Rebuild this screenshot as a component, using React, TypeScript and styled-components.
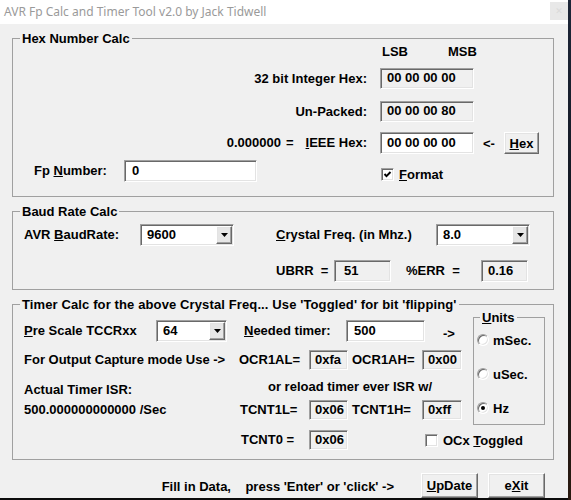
import React from "react";
import styled, { createGlobalStyle, css } from "styled-components";

const GlobalStyle = createGlobalStyle`
  html, body { margin: 0; padding: 0; background: #f0f0f0; }
  body { font-family: "Liberation Sans", Arial, sans-serif; }
  *, *::before, *::after { box-sizing: border-box; }
`;

const Sunken = css`
  border: 1px solid;
  border-color: #a0a0a0 #ffffff #ffffff #a0a0a0;
  box-shadow: inset 1px 1px 0 #696969, inset -1px -1px 0 #e3e3e3;
`;

const Raised = css`
  border: 1px solid;
  border-color: #ffffff #696969 #696969 #ffffff;
  box-shadow: inset -1px -1px 0 #a0a0a0, inset 1px 1px 0 #e3e3e3;
`;

const Screen = styled.div`
  display: flex;
  width: 571px;
  height: 500px;
  overflow: hidden;
  background: #161a22;
`;

const Window = styled.div`
  width: 568px;
  height: 500px;
  flex: none;
  display: flex;
  flex-direction: column;
  background: #f0f0f0;
`;

const TitleBar = styled.div`
  height: 24px;
  flex: none;
  background: #ffffff;
  display: flex;
  align-items: flex-start;
  justify-content: space-between;
  padding-left: 4px;
`;

const TitleText = styled.span`
  font-family: "Noto Sans", "Open Sans", sans-serif;
  font-size: 12px;
  line-height: 24px;
  color: #9a9a9a;
`;

const CloseBox = styled.div`
  width: 18px;
  height: 18px;
  margin-top: 2px;
  background: #e8e8e8;
  color: #dadada;
  font-family: "DejaVu Sans", sans-serif;
  font-size: 9px;
  line-height: 18px;
  text-align: center;
`;

const Client = styled.div`
  flex: 1;
  display: flex;
  flex-direction: column;
  padding: 14px 14px 0 12px;
  font-size: 13px;
  font-weight: bold;
  color: #000;
`;

const Group = styled.div<{ $h: number; $mt?: number; $area?: string }>`
  position: relative;
  flex: none;
  height: ${(p) => p.$h}px;
  margin-top: ${(p) => p.$mt ?? 0}px;
  border: 1px solid #a0a0a0;
  ${(p) => (p.$area ? `grid-area: ${p.$area};` : "")}
`;

const Legend = styled.span<{ $left?: number; $ls?: number }>`
  position: absolute;
  top: -8px;
  left: ${(p) => p.$left ?? 7}px;
  padding: 0 2px;
  background: #f0f0f0;
  line-height: 15px;
  letter-spacing: ${(p) => p.$ls ?? 0}px;
  white-space: pre;
`;

/* ---------- shared controls ---------- */

const Field = styled.div<{ $w: number; $h?: number; $white?: boolean; $pl?: number; $area?: string; $ml?: number }>`
  ${Sunken};
  flex: none;
  width: ${(p) => p.$w}px;
  height: ${(p) => p.$h ?? 21}px;
  margin-left: ${(p) => p.$ml ?? 0}px;
  padding-left: ${(p) => p.$pl ?? 6}px;
  background: ${(p) => (p.$white ? "#ffffff" : "#f0f0f0")};
  line-height: ${(p) => (p.$h ?? 21) - 3}px;
  white-space: pre;
  ${(p) => (p.$area ? `grid-area: ${p.$area};` : "")}
`;

const Select = styled.div<{ $w: number }>`
  ${Sunken};
  flex: none;
  display: flex;
  width: ${(p) => p.$w}px;
  height: 22px;
  padding: 1px;
  background: #ffffff;
`;

const SelectValue = styled.span`
  flex: 1;
  padding-left: 5px;
  line-height: 17px;
`;

const SelectArrow = styled.span`
  ${Raised};
  width: 16px;
  height: 18px;
  flex: none;
  background: #e6e6e6;
  display: flex;
  align-items: center;
  justify-content: center;
`;

const Button = styled.button<{ $w: number; $h: number; $area?: string }>`
  ${Raised};
  flex: none;
  width: ${(p) => p.$w}px;
  height: ${(p) => p.$h}px;
  padding: 0;
  background: #f0f0f0;
  font-family: "Liberation Sans", Arial, sans-serif;
  font-size: 13px;
  font-weight: bold;
  color: #000;
  ${(p) => (p.$area ? `grid-area: ${p.$area};` : "")}
`;

const CheckRow = styled.div<{ $area?: string; $mt?: number; $ml?: number }>`
  display: flex;
  align-items: center;
  gap: 5px;
  height: 13px;
  margin-top: ${(p) => p.$mt ?? 0}px;
  margin-left: ${(p) => p.$ml ?? 0}px;
  ${(p) => (p.$area ? `grid-area: ${p.$area};` : "")}
`;

const CheckBox = styled.span`
  ${Sunken};
  width: 13px;
  height: 13px;
  flex: none;
  background: #ffffff;
  display: flex;
  align-items: center;
  justify-content: center;
`;

const RadioDot = styled.span<{ $on?: boolean }>`
  width: 12px;
  height: 12px;
  flex: none;
  border-radius: 50%;
  border: 1px solid;
  border-color: #a0a0a0 #ffffff #ffffff #a0a0a0;
  box-shadow: inset 1px 1px 0 #696969, inset -1px -1px 0 #e3e3e3;
  background: #ffffff;
  display: flex;
  align-items: center;
  justify-content: center;
  &::after {
    content: "";
    width: 4px;
    height: 4px;
    border-radius: 50%;
    background: ${(p) => (p.$on ? "#000" : "transparent")};
  }
`;

const Label = styled.span<{ $w?: number; $ml?: number; $mt?: number; $lh?: number }>`
  flex: none;
  ${(p) => (p.$w ? `width: ${p.$w}px;` : "")}
  margin-left: ${(p) => p.$ml ?? 0}px;
  margin-top: ${(p) => p.$mt ?? 0}px;
  line-height: ${(p) => p.$lh ?? 16}px;
  white-space: pre;
`;

/* ---------- Hex group ---------- */

const HexGrid = styled.div`
  display: grid;
  grid-template-columns: 111px 133px 123px 94px 30px 35px;
  grid-template-rows: 29px 33px 31px 28px 24px;
  grid-template-areas:
    ". . . hdr hdr ."
    "l1 l1 l1 b1 . ."
    "l2 l2 l2 b2 . ."
    "l3 l3 l3 b3 arr btn"
    "fpl fpi . chk chk .";
  align-items: start;
`;

const ColHeads = styled.div`
  grid-area: hdr;
  display: flex;
  gap: 40px;
  padding: 5px 0 0 2px;
  line-height: 16px;
`;

const HexLabel = styled.div<{ $area: string; $lh?: number }>`
  grid-area: ${(p) => p.$area};
  text-align: right;
  padding-right: 13px;
  line-height: ${(p) => p.$lh ?? 21}px;
  white-space: pre;
`;

const Eq = styled.span`
  display: inline-block;
  margin: 0 12px 0 5px;
`;

const GridText = styled.div<{ $area: string; $pl?: number; $lh?: number }>`
  grid-area: ${(p) => p.$area};
  padding-left: ${(p) => p.$pl ?? 0}px;
  line-height: ${(p) => p.$lh ?? 22}px;
  white-space: pre;
`;

/* ---------- Baud group ---------- */

const BaudBody = styled.div`
  display: flex;
  flex-direction: column;
  gap: 14px;
  padding: 12px 0 0 11px;
`;

const Row = styled.div<{ $pl?: number; $mt?: number; $align?: string }>`
  display: flex;
  align-items: ${(p) => p.$align ?? "center"};
  padding-left: ${(p) => p.$pl ?? 0}px;
  margin-top: ${(p) => p.$mt ?? 0}px;
`;

/* ---------- Timer group ---------- */

const TimerGrid = styled.div`
  display: grid;
  grid-template-columns: 460px 72px;
  grid-template-rows: 32px 29px 21px 29px auto;
  grid-template-areas:
    "r1 units"
    "r2 units"
    "r3 units"
    "r4 units"
    "r5 r5";
  align-items: start;
  padding-top: 12px;
`;

const TimerRow = styled(Row)<{ $area: string }>`
  grid-area: ${(p) => p.$area};
  padding-left: 11px;
`;

const UnitsBody = styled.div`
  display: flex;
  flex-direction: column;
  gap: 20px;
  padding: 15px 0 0 3px;
`;

const RadioRow = styled.div`
  display: flex;
  align-items: center;
  gap: 4px;
  height: 14px;
`;

/* ---------- Footer ---------- */

const Footer = styled.div`
  flex: none;
  display: flex;
  align-items: center;
  justify-content: flex-end;
  gap: 10px;
  height: 25px;
  margin-top: 13px;
  padding-right: 9px;
`;

const FooterText = styled.span`
  white-space: pre;
  margin-right: 17px;
  padding-top: 1px;
`;

const BottomEdge = styled.div`
  height: 2px;
  flex: none;
  background: #0c0c0c;
`;

const DesktopStrip = styled.div`
  flex: 1;
  background: linear-gradient(#1d2638, #0f1218 60%, #2a1a10);
`;

const Arrow = () => (
  <svg width="7" height="4" viewBox="0 0 7 4">
    <polygon points="0,0 7,0 3.5,4" fill="#000" />
  </svg>
);

const Check = () => (
  <svg width="9" height="9" viewBox="0 0 9 9">
    <polyline points="1.5,4 3.5,6.2 7.5,2" fill="none" stroke="#000" strokeWidth="1.9" />
  </svg>
);

const Dropdown = ({ w, value }: { w: number; value: string }) => (
  <Select $w={w}>
    <SelectValue>{value}</SelectValue>
    <SelectArrow>
      <Arrow />
    </SelectArrow>
  </Select>
);

export default function App() {
  return (
    <>
      <GlobalStyle />
      <Screen>
        <Window>
          <TitleBar>
            <TitleText>AVR Fp Calc and Timer Tool v2.0 by Jack Tidwell</TitleText>
            <CloseBox>✕</CloseBox>
          </TitleBar>
          <Client>
            <Group $h={159}>
              <Legend>Hex Number Calc</Legend>
              <HexGrid>
                <ColHeads>
                  <span>LSB</span>
                  <span>MSB</span>
                </ColHeads>
                <HexLabel $area="l1">32 bit Integer Hex:</HexLabel>
                <Field $area="b1" $w={94}>00 00 00 00</Field>
                <HexLabel $area="l2">Un-Packed:</HexLabel>
                <Field $area="b2" $w={94}>00 00 00 80</Field>
                <HexLabel $area="l3" $lh={22}>
                  0.000000<Eq>=</Eq>
                  <u>I</u>EEE Hex:
                </HexLabel>
                <Field $area="b3" $w={94} $h={22} $white>00 00 00 00</Field>
                <GridText $area="arr" $pl={9} $lh={24}>&lt;-</GridText>
                <Button $area="btn" $w={35} $h={22}>
                  <u>H</u>ex
                </Button>
                <GridText $area="fpl" $pl={21}>
                  Fp <u>N</u>umber:
                </GridText>
                <Field $area="fpi" $w={133} $h={22} $white $pl={7}>0</Field>
                <CheckRow $area="chk" $mt={8} $ml={1}>
                  <CheckBox>
                    <Check />
                  </CheckBox>
                  <span>
                    <u>F</u>ormat
                  </span>
                </CheckRow>
              </HexGrid>
            </Group>

            <Group $h={79} $mt={14}>
              <Legend>Baud Rate Calc</Legend>
              <BaudBody>
                <Row>
                  <Label $w={116}>
                    AVR <u>B</u>audRate:
                  </Label>
                  <Dropdown w={94} value="9600" />
                  <Label $w={160} $ml={42}>
                    <u>C</u>rystal Freq. (in Mhz.)
                  </Label>
                  <Dropdown w={94} value="8.0" />
                </Row>
                <Row $pl={252}>
                  <Label $w={58}>UBRR  =</Label>
                  <Field $w={57} $h={22} $pl={9}>51</Field>
                  <Label $w={75} $ml={15}>%ERR  =</Label>
                  <Field $w={47} $h={22} $pl={6}>0.16</Field>
                </Row>
              </BaudBody>
            </Group>

            <Group $h={156} $mt={14}>
              <Legend $ls={0.12}>Timer Calc for the above Crystal Freq... Use 'Toggled' for bit 'flipping'</Legend>
              <TimerGrid>
                <TimerRow $area="r1" $mt={3}>
                  <Label $w={132}>
                    <u>P</u>re Scale TCCRxx
                  </Label>
                  <Dropdown w={71} value="64" />
                  <Label $w={102} $ml={17}>
                    <u>N</u>eeded timer:
                  </Label>
                  <Field $w={79} $h={22} $white $pl={7}>500</Field>
                  <Label $ml={18} $mt={6}>-&gt;</Label>
                </TimerRow>
                <TimerRow $area="r2" $mt={1}>
                  <Label $w={215}>For Output Capture mode Use -&gt;</Label>
                  <Label $w={70}>OCR1AL=</Label>
                  <Field $w={39} $h={20} $pl={5}>0xfa</Field>
                  <Label $w={70} $ml={4}>OCR1AH=</Label>
                  <Field $w={40} $h={20} $pl={5}>0x00</Field>
                </TimerRow>
                <TimerRow $area="r3" $align="flex-start">
                  <Label $w={244} $mt={4}>Actual Timer ISR:</Label>
                  <Label $mt={1}>or reload timer ever ISR w/</Label>
                </TimerRow>
                <TimerRow $area="r4" $mt={1}>
                  <Label $w={216}>500.000000000000 /Sec</Label>
                  <Label $w={69}>TCNT1L=</Label>
                  <Field $w={39} $h={20} $pl={5}>0x06</Field>
                  <Label $w={70} $ml={4}>TCNT1H=</Label>
                  <Field $w={40} $h={20} $pl={5}>0xff</Field>
                </TimerRow>
                <TimerRow $area="r5" $mt={2}>
                  <Label $w={68} $ml={217}>TCNT0 =</Label>
                  <Field $w={39} $h={20} $pl={5}>0x06</Field>
                  <CheckRow $ml={77}>
                    <CheckBox />
                    <span>
                      OCx <u>T</u>oggled
                    </span>
                  </CheckRow>
                </TimerRow>
                <Group $area="units" $h={108}>
                  <Legend $left={6}>
                    <u>U</u>nits
                  </Legend>
                  <UnitsBody>
                    <RadioRow>
                      <RadioDot />
                      <span>mSec.</span>
                    </RadioRow>
                    <RadioRow>
                      <RadioDot />
                      <span>uSec.</span>
                    </RadioRow>
                    <RadioRow>
                      <RadioDot $on />
                      <span>Hz</span>
                    </RadioRow>
                  </UnitsBody>
                </Group>
              </TimerGrid>
            </Group>

            <Footer>
              <FooterText>Fill in Data,    press 'Enter' or 'click' -&gt;</FooterText>
              <Button $w={57} $h={25}>
                <u>U</u>pDate
              </Button>
              <Button $w={57} $h={25}>
                e<u>X</u>it
              </Button>
            </Footer>
          </Client>
          <BottomEdge />
        </Window>
        <DesktopStrip />
      </Screen>
    </>
  );
}
